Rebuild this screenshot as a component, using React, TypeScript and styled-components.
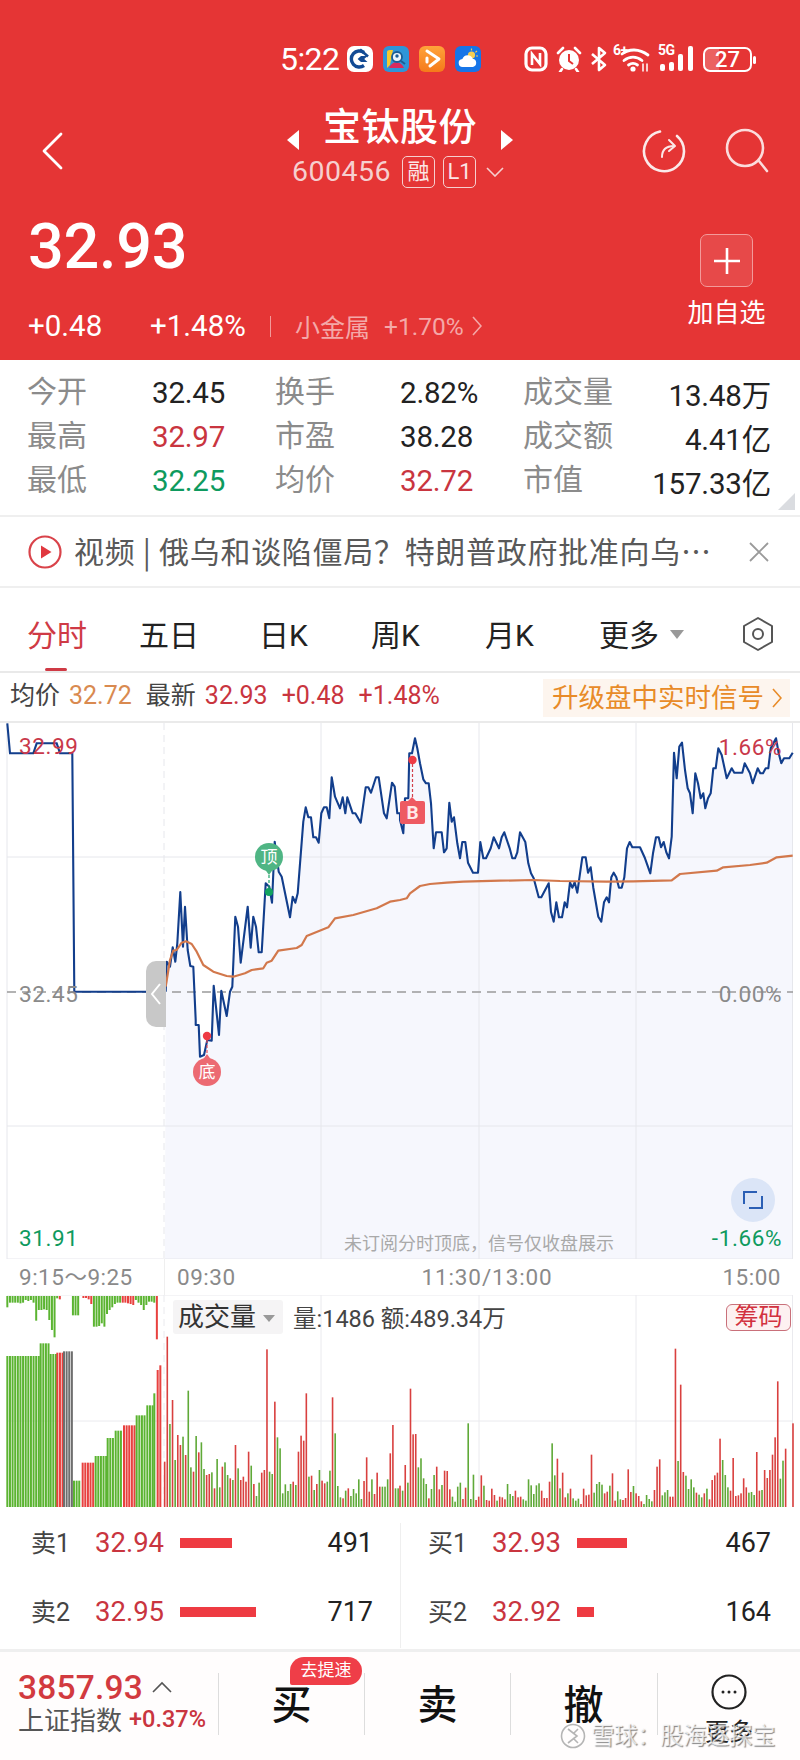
import React from "react";
import styled, { createGlobalStyle } from "styled-components";

const FONT = `Roboto, "Noto Sans CJK SC", sans-serif`;
const RED = "#C9353F";
const GREEN = "#0E9A5E";

const Global = createGlobalStyle`
  html, body { margin: 0; padding: 0; background: #fff; }
  body { font-family: ${FONT}; }
  * { box-sizing: border-box; }
`;

const Page = styled.div`
  position: relative; width: 800px; height: 1760px; overflow: hidden;
  display: flex; flex-direction: column; background: #fff; font-family: ${FONT};
`;

/* ---------- header ---------- */
const Header = styled.header`
  height: 360px; flex: none; background: #E53535; color: #fff;
  display: flex; flex-direction: column;
`;
const StatusBar = styled.div`
  height: 100px; padding: 46px 48px 0 280px; display: flex; align-items: flex-start;
`;
const Clock = styled.span`
  width: 67px; height: 26px; line-height: 26px; font-size: 32px; letter-spacing: -.6px; white-space: nowrap;
`;
const AppIcons = styled.div`display: flex; gap: 10px; align-items: center;`;
const SysIcons = styled.div`margin-left: auto; display: flex; align-items: center; gap: 7px; height: 26px;`;
const Battery = styled.div`
  position: relative; width: 49px; height: 25px; border: 2px solid #fff; border-radius: 7px;
  display: flex; align-items: center; justify-content: center; font-size: 22px; font-weight: 500;
  background: linear-gradient(90deg, rgba(255,255,255,.22) 0 30%, transparent 30%);
  &::after { content: ""; position: absolute; right: -6px; top: 7px; width: 3px; height: 8px; background: #fff; border-radius: 2px; }
`;
const TinyStack = styled.div`position: relative; display: flex; align-items: flex-end; height: 26px;`;
const TinyTag = styled.span`
  position: absolute; left: ${p => p.$left}px; top: -3px; font-size: 14px; font-weight: 700; line-height: 14px; letter-spacing: -.6px;
`;

const Nav = styled.div`
  height: 96px; display: grid; grid-template-columns: 1fr auto 1fr; align-items: center;
`;
const Back = styled.div`padding: 6px 0 0 40px; display: flex;`;
const Center = styled.div`display: flex; flex-direction: column; align-items: center; padding-top: 3px;`;
const TitleRow = styled.div`display: flex; align-items: center; gap: 24px; height: 44px;`;
const Title = styled.h1`margin: 0; font-size: 38px; line-height: 44px; font-weight: 500; letter-spacing: .5px;`;
const Tri = styled.span`
  width: 0; height: 0; margin-top: 27px; border-top: 10px solid transparent; border-bottom: 10px solid transparent;
  ${p => p.$dir === "l" ? "border-right: 12px solid #fff;" : "border-left: 12px solid #fff;"}
`;
const SubRow = styled.div`display: flex; align-items: center; height: 46px; gap: 8px; color: #F6CFCF; margin-left: -4px;`;
const Code = styled.span`font-size: 28.5px; letter-spacing: .5px; margin-right: 3px;`;
const Tag = styled.span`
  width: 33px; height: 32px; border: 1.5px solid #F6CFCF; border-radius: 5px; font-size: 22px; line-height: 29px;
  text-align: center; color: #FBE6E6;
`;
const Caret = styled.span`display: flex; margin-left: 2px;`;
const NavRight = styled.div`display: flex; justify-content: flex-end; gap: 34px; padding: 6px 29px 0 0;`;

const Quote = styled.div`flex: 1; display: flex; justify-content: space-between;`;
const QuoteLeft = styled.div`display: flex; flex-direction: column; padding-left: 28px;`;
const Price = styled.div`height: 96px; line-height: 102px; font-size: 63px; font-weight: 500; letter-spacing: -.3px;`;
const ChangeRow = styled.div`height: 68px; display: flex; align-items: center; font-size: 29.5px;`;
const ChangeA = styled.span`width: 122px;`;
const ChangeB = styled.span`width: 120px;`;
const VLine = styled.span`width: 1px; height: 21px; background: rgba(255,255,255,.5); margin-right: 24px;`;
const Sector = styled.span`font-size: 25px; color: #F4A8A8; width: 89px;`;
const SectorPct = styled.span`font-size: 24.5px; color: #F4A8A8; margin-right: 8px;`;
const AddCol = styled.div`
  width: 113px; padding: 38px 34px 0 0; display: flex; flex-direction: column; align-items: center; flex: none;
`;
const AddBtn = styled.div`
  width: 53px; height: 53px; flex: none; border: 1px solid #F39A9A; border-radius: 7px; background: rgba(255,255,255,.1);
  display: flex; align-items: center; justify-content: center;
`;
const AddText = styled.span`font-size: 26px; line-height: 30px; margin-top: 11px; white-space: nowrap;`;

/* ---------- info ---------- */
const InfoGrid = styled.section`
  position: relative; height: 157px; flex: none; padding: 11px 29px 0 28px; border-bottom: 2px solid #EFEFEF;
  display: grid; grid-template-columns: 124px 124px 124px 124px 124px 1fr; grid-auto-rows: 44px; align-items: center;
  &::after { content: ""; position: absolute; right: 5px; bottom: 5px; width: 0; height: 0;
    border-left: 17px solid transparent; border-bottom: 17px solid #DADCE0; }
`;
const InfoLabel = styled.span`font-size: 30px; line-height: 38px; color: #8B8B8B; font-weight: 400; margin: -2px 0 0 -1px;`;
const InfoValue = styled.span`
  font-size: 29.5px; color: ${p => p.$c || "#222"}; text-align: ${p => p.$right ? "right" : "left"}; white-space: nowrap; letter-spacing: -.2px;
`;

const Notice = styled.section`
  height: 71px; flex: none; border-bottom: 2px solid #EFEFEF; display: flex; align-items: center; padding: 0 30px 0 28px;
`;
const NoticeIcon = styled.svg`flex: none;`;
const NoticeText = styled.span`
  font-size: 30px; line-height: 40px; letter-spacing: .7px; color: #595959; margin: -3px 0 0 12px; white-space: nowrap;
  font-family: "Noto Sans CJK SC", Roboto, sans-serif;
`;
const NoticeClose = styled.div`margin-left: auto; display: flex;`;

const Tabs = styled.nav`
  height: 85px; flex: none; border-bottom: 2px solid #E9E9E9; padding: 0 0 0 27px; display: grid;
  grid-template-columns: 112px 120px 112px 114px 114px 142px auto; align-items: center;
`;
const Tab = styled.span`
  position: relative; font-size: 30px; height: 83px; padding-top: 7px; color: ${p => p.$on ? "#CF3A45" : "#222"};
  white-space: nowrap; display: flex; align-items: center; gap: 11px;
  ${p => p.$on ? `&::after { content: ""; position: absolute; left: 18px; bottom: 0; width: 22px; height: 3px; background: #CF3A45; border-radius: 2px; }` : ""}
`;
const MoreTri = styled.span`
  width: 0; height: 0; margin-top: 2px; border-left: 7px solid transparent; border-right: 7px solid transparent; border-top: 9px solid #999;
`;
const Gear = styled.svg`margin-top: 8px;`;

const Legend = styled.div`
  height: 50px; flex: none; border-bottom: 2px solid #EAEAEA; padding: 0 10px 0 10px; display: flex; align-items: center;
  font-size: 25px; line-height: 34px; white-space: nowrap;
`;
const LegendItem = styled.span`color: ${p => p.$c}; margin: -3px ${p => p.$mr}px 0 0;`;
const Upgrade = styled.span`
  margin-left: auto; height: 38px; width: 247px; padding-left: 9px; background: #FDF5EE; color: #E88B28; font-size: 26.5px; line-height: 38px;
  display: flex; align-items: center; gap: 8px; margin-top: 2px;
`;

/* ---------- price chart ---------- */
const ChartBox = styled.section`position: relative; height: 536px; flex: none;`;
const ChartSvg = styled.svg`display: block; position: absolute; inset: 0;`;
const AxisText = styled.span`
  position: absolute; top: ${p => p.$y - 723 - 14}px; line-height: 28px; font-size: 22.5px; letter-spacing: .6px; color: ${p => p.$c};
  ${p => p.$right ? `right: ${800 - p.$x}px;` : `left: ${p.$x}px;`}
`;
const Handle = styled.div`
  position: absolute; left: 146px; top: 238px; width: 20px; height: 66px; background: #C8C8C8; border-radius: 10px 0 0 10px;
  display: flex; align-items: center; justify-content: center;
`;
const Pin = styled.span`
  position: absolute; left: ${p => p.$x - 14}px; top: ${p => p.$y - 723 - 14}px; width: 28px; height: 28px; border-radius: 50%;
  background: ${p => p.$c}; color: #fff; font-size: 17px; line-height: 28px; text-align: center;
  &::before { content: ""; position: absolute; left: 9px; ${p => p.$up ? "top: -4px; border-bottom: 7px solid " + p.$c : "bottom: -4px; border-top: 7px solid " + p.$c};
    border-left: 5px solid transparent; border-right: 5px solid transparent; }
`;
const BuyMark = styled.span`
  position: absolute; left: 400px; top: 78px; width: 25px; height: 23px; background: #EE5A62; border-radius: 2px; color: #FFE9E9;
  font-size: 19px; font-weight: 700; line-height: 23px; text-align: center;
  &::before { content: ""; position: absolute; left: 7px; top: -4px; border-bottom: 5px solid #EE5A62;
    border-left: 5px solid transparent; border-right: 5px solid transparent; }
`;
const Expand = styled.div`
  position: absolute; left: 731px; top: 455px; width: 44px; height: 44px; border-radius: 50%; background: #DBE5F7;
  display: flex; align-items: center; justify-content: center;
`;
const Hint = styled.span`position: absolute; left: 344px; top: 509px; font-size: 18px; line-height: 24px; color: #A9A9A9; white-space: nowrap;`;

const TimeAxis = styled.div`
  height: 36px; flex: none; display: flex; font-size: 22.5px; color: #8A8A8A; letter-spacing: .5px; white-space: nowrap;
`;
const PreTime = styled.div`width: 165px; padding-left: 19px; line-height: 36px; border-right: 1px solid #EFEFEF;`;
const SessionTime = styled.div`
  flex: 1; padding: 0 19px 0 12px; display: grid; grid-template-columns: 1fr auto 1fr; line-height: 36px;
`;
const MidTime = styled.span`margin-left: 16px; letter-spacing: .9px;`;
const EndTime = styled.span`text-align: right;`;

/* ---------- volume ---------- */
const VolumeBox = styled.section`position: relative; height: 212px; flex: none;`;
const VolumeHead = styled.div`
  position: absolute; left: 173px; top: 5px; display: flex; align-items: center; white-space: nowrap;
`;
const VolumeChip = styled.span`
  width: 110px; height: 34px; background: #F5F4F5; border-radius: 3px; font-size: 26px; line-height: 34px; color: #333; padding-left: 5px;
  display: flex; align-items: center; gap: 7px;
`;
const ChipTri = styled.span`width: 0; height: 0; border-left: 6px solid transparent; border-right: 6px solid transparent; border-top: 7px solid #999; margin-top: 3px;`;
const VolumeStat = styled.span`margin-left: 10px; font-size: 23.5px; color: #444;`;
const Chips = styled.span`
  position: absolute; right: 9px; top: 9px; width: 65px; height: 27px; border: 1px solid #C9707A; border-radius: 6px; background: #FDF1F1;
  color: #D2323F; font-size: 24px; line-height: 25px; text-align: center;
`;

/* ---------- order book ---------- */
const Book = styled.section`height: 142px; flex: none; display: flex; padding-top: 2px;`;
const BookSide = styled.div`
  width: 400px; height: 125px; margin-top: 14px; display: flex; flex-direction: column;
  padding: 0 ${p => p.$right ? 29 : 27}px 0 ${p => p.$right ? 28 : 32}px; ${p => p.$right ? "border-left: 1px solid #EFEFEF;" : ""}
`;
const BookRow = styled.div`display: flex; align-items: center; height: 69px; flex: none; margin-top: ${p => p.$first ? -15 : 0}px;`;
const BookLabel = styled.span`width: 63px; font-size: 25px; color: #444; white-space: nowrap; margin: -3px 0 0 -1px;`;
const BookPrice = styled.span`width: 85px; font-size: 27.500px; color: ${RED}; margin: 0 0 0 1px;`;
const BookBar = styled.span`width: ${p => p.$w}px; height: 10px; background: #EE3B42;`;
const BookQty = styled.span`margin-left: auto; font-size: 27px; color: #222;`;

/* ---------- bottom ---------- */
const Bottom = styled.footer`
  flex: 1; border-top: 3px solid #EFEFEF; background: #FFFDFD; display: flex; align-items: flex-start; padding-top: 21px;
`;
const IndexBlock = styled.div`width: 218px; flex: none; padding-left: 18px; margin-top: -3px;`;
const IndexTop = styled.div`display: flex; align-items: center; height: 34px; gap: 9px;`;
const IndexValue = styled.span`font-size: 33.5px; font-weight: 500; color: #D23A3F; letter-spacing: .2px;`;
const IndexBottom = styled.div`display: flex; align-items: center; height: 29px; gap: 7px; margin-top: 0;`;
const IndexName = styled.span`font-size: 26px; color: #555; white-space: nowrap;`;
const IndexPct = styled.span`font-size: 23.5px; color: #C9353F; font-weight: 500;`;
const Action = styled.div`
  position: relative; width: 146px; height: 62px; flex: none; border-left: 1px solid #DDD;
  display: flex; flex-direction: column; align-items: center; justify-content: center;
  font-size: 40px; color: #111; font-weight: 500; line-height: 44px; padding-top: 3px;
`;
const Speed = styled.span`
  position: absolute; left: 71px; top: -16px; width: 72px; height: 28px; background: #EF3E48; color: #fff; font-size: 17px; line-height: 27px;
  text-align: center; border-radius: 14px 14px 14px 2px; font-weight: 400; z-index: 1;
`;
const MoreCell = styled.div`
  width: 143px; height: 62px; flex: none; border-left: 1px solid #DDD; display: flex; flex-direction: column; align-items: center;
  margin-left: 1px;
`;
const MoreIcon = styled.svg`flex: none; margin-top: 1px;`;
const MoreLabel = styled.span`font-size: 24px; line-height: 30px; color: #222; margin-top: 7px; flex: none;`;
const Watermark = styled.div`
  position: absolute; left: 560px; top: 1722px; display: flex; align-items: center; gap: 5px; pointer-events: none;
`;
const WatermarkText = styled.span`
  font-size: 23.5px; line-height: 28px; color: rgba(255,255,255,.72); text-shadow: 1px 1px 1px rgba(90,90,90,.75); white-space: nowrap; letter-spacing: -.5px;
`;

/* ---------- chart data (coordinates read from the reference) ---------- */
type P = [number, number];
const z3 = (a: number[]): P[] => { const r: P[] = []; for (let i = 0; i < a.length; i += 2) r.push([a[i] / 3, 720 + a[i + 1] / 3]); return r; };
const z4 = (a: number[]): P[] => { const r: P[] = []; for (let i = 0; i < a.length; i += 2) r.push([400 + a[i] / 3, 720 + a[i + 1] / 3]); return r; };

const prePts = z3([22,10,30,100,100,100,110,70,170,70,180,100,217,100,223,815,495,815]);
const sessionPts = [
  ...z3([497,815,500,725,510,740,518,682,526,725,532,670,541,516,549,680,555,560,563,690,571,738,580,740,587,900,587,915,596,915,600,1010,612,1005,622,960,635,962,641,797,657,945,664,812,680,888,690,815,697,800,706,590,714,620,722,728,743,560,752,683,760,590,768,620,776,697,785,697,797,490,808,500,816,548,824,365,836,455,845,470,870,592,878,530,886,548,893,520,910,305,917,262,925,292,933,292,940,352,948,352,956,368,964,280,972,262,980,262,988,295,995,172,1005,230,1020,265,1028,232,1036,280,1042,232,1058,280,1066,280,1082,308,1097,202,1105,202,1113,218,1128,172,1136,172,1152,280,1160,295,1176,188,1184,200,1192,280,1200,280]),
  ...z4([0,300,10,340,15,235,25,235,28,100,36,100,45,55,52,85,60,130,70,178,78,190,86,190,93,250,101,385,108,337,125,337,132,397,140,385,148,248,155,305,162,292,172,370,180,415,187,366,196,366,204,428,219,458,234,458,241,366,250,415,258,415,272,385,281,352,297,385,305,352,313,337,329,385,337,415,345,415,352,397,360,337,376,366,385,430,393,460,401,475,416,532,424,532,446,490,453,576,461,605,469,547,477,592,486,592,494,547,501,562,510,487,517,503,524,487,532,518,547,412,557,412,564,458,572,442,580,503,595,590,604,605,612,547,620,532,627,547,634,472,641,458,649,472,657,503,665,503,673,472,681,385,689,366,697,382,720,382,735,415,751,460,759,400,768,352,776,352,783,382,791,366,799,397,807,415,815,350,822,98,830,175,838,80,846,68,855,150,863,205,870,220,878,280,886,160,894,190,902,235,910,220,916,265,924,235,932,220,940,145,947,145,955,85,965,105,980,175,995,145,1003,158,1027,158,1034,130,1050,160,1058,190,1073,145,1081,160,1089,160,1097,145,1105,145,1112,85,1128,55,1136,100,1144,130,1152,115,1168,115,1178,98]),
];
const avgPts = [
  ...z3([497,800,510,720,520,692,530,690,545,668,558,664,575,672,590,695,610,735,640,755,680,768,700,770,735,760,755,750,790,745,800,728,815,722,835,692,890,684,905,675,920,648,985,622,1005,595,1060,585,1130,565,1170,545,1200,540]),
  ...z4([20,535,30,520,60,498,90,492,140,488,190,485,300,482,400,480,480,483,620,485,700,484,815,481,840,462,950,452,970,442,1050,435,1100,428,1130,412,1178,407]),
];
const d = (pts: P[]) => pts.map((p, i) => `${i ? "L" : "M"}${p[0].toFixed(1)} ${p[1].toFixed(1)}`).join("");

const VOL_BASE = 1507;
const PITCH = 7.87;
const vol7 = "r515 r140 g402 r330 g510 r435 r465 g440 r495 g302 g532 r545 g438 r487 g457 g537 r555 r552 g547 r595 g507 g592 r530 g517 g555 r565 g570 r465 g535 r570 r560 r575 r485 g527 r582 g618 g578 r548 r540 r178 g545 g552 r335 g442 g475 g610 g583 g603 g582 r575 g585 r485 r437 r452 r310 g560 r557 g600 r582 g540 r572 r580 g575 g542 r322 g430 g588 g622 r625 g602 r595 g618 g597 g610 g568 g627 r573 r502 r605 g568 r612 r548 r590 g590 g590 g568 r490 r405 g595 g595".split(" ");
const vol8 = "r587 g602 r525 g578 r296 r433 r432 g532 g505 g565 g582 r625 g597 g555 r530 r598 g585 r542 r543 r598 g620 g635 g590 g578 r627 r593 g400 g627 g554 r630 r620 r556 g587 r630 r632 r596 r615 g632 r620 r622 r628 g582 g612 g618 r602 r622 r620 g628 g632 g568 g586 g612 g586 g580 r602 r624 r624 r575 g460 g556 r506 g595 r548 r622 g610 r596 g625 g632 g626 r642 r596 r616 r614 r494 g608 g582 g576 g584 r610 r605 g587 r550 r632 g604 g628 r630 r624 r538 r606 g588 r610 r618 r634 g642 g615 g627 g634 r600 r530 r508 g616 g607 g600 r620 r620 r176 g513 r284 r546 g557 g597 g568 g592 r608 g614 g622 r610 g596 r628 r570 r556 r548 r446 g510 g555 g592 r602 r504 r618 r616 r610 r565 r592 g608 g606 g615 r486 r602 g600 r540 r564 r540 r494 r442 r274 g566 g512 r476".split(" ");
const preVol: [number, number, string, number][] = [
  [22, 120, "g", 198], [122, 150, "g", 160], [152, 170, "g", 192], [172, 190, "r", 188], [192, 220, "k", 184],
  [222, 245, "g", 572], [248, 284, "r", 518], [287, 320, "g", 498], [323, 345, "g", 444], [347, 369, "g", 422],
  [372, 407, "r", 406], [410, 440, "g", 376], [442, 460, "g", 346], [463, 470, "g", 310], [473, 477, "r", 240], [481, 485, "r", 226],
];
const hang = "g52 g38 g38 g38 g38 g40 g38 g30 g33 g30 g38 g92 g60 g60 g58 g60 g90 g120 g142 g25 r28 - - - - g76 g76 g76 - r24 r24 r28 r42 g110 g110 g108 g100 g110 g72 g60 g52 g42 g38 g38 r38 r38 r40 r42 r45 g30 g38 g45 g60 g45 g35 g35 g38 r148".split(" ");

const COL: Record<string, string> = { r: "#E8413F", g: "#5BB431", k: "#6E6E6E" };
const SCOL: Record<string, string> = { r: "#D9403F", g: "#5FA938" };

function volumeBars() {
  const out: React.ReactNode[] = [];
  preVol.forEach(([a, b, c, top], s) => {
    for (let x = a, i = 0; x <= b; x += PITCH, i++)
      out.push(<rect key={`p${s}-${i}`} x={x / 3 - 1} y={1290 + top / 3} width={2} height={VOL_BASE - 1290 - top / 3} fill={COL[c]} />);
  });
  hang.forEach((t, i) => {
    if (t === "-") return;
    const x = (22 + i * PITCH) / 3;
    out.push(<rect key={`h${i}`} x={x - 1} y={1296} width={2} height={1290 + Number(t.slice(1)) / 3 - 1296} fill={COL[t[0]]} />);
  });
  const main = (arr: string[], x0: number, k: string) => arr.forEach((t, i) => {
    const x = x0 + i * (PITCH / 3);
    const y = 1290 + Number(t.slice(1)) / 3;
    out.push(<rect key={k + i} x={x - .8} y={y} width={1.6} height={VOL_BASE - y} fill={SCOL[t[0]]} />);
  });
  main(vol7, 494 / 3, "a");
  main(vol8, 400, "b");
  out.push(<rect key="last" x={792.2} y={1290 + 400 / 3} width={1.6} height={VOL_BASE - 1290 - 400 / 3} fill={SCOL.r} />);
  return out;
}

const GRID = "#E6E7EC";

function PriceChart() {
  const area = d(sessionPts) + `L793 1259L165 1259Z`;
  return (
    <ChartSvg width={800} height={536} viewBox="0 723 800 536">
      <path d={area} fill="#F6F7FD" />
      <g stroke={GRID} strokeWidth={1} fill="none">
        <path d="M7 723V1259M321 723V1259M479 723V1259M636 723V1259M792.5 723V1259" />
        <path d="M7 857H793M7 1126H793M7 1259H793" />
        <path d="M164 723V1259" strokeDasharray="7 5" />
      </g>
      <path d="M7 992H793" stroke="#9A9A9A" strokeWidth={1.4} strokeDasharray="9 6" />
      <path d={d(prePts)} fill="none" stroke="#123E8C" strokeWidth={2.1} />
      <path d={d(sessionPts)} fill="none" stroke="#123E8C" strokeWidth={2.1} strokeLinejoin="round" />
      <path d={d(avgPts)} fill="none" stroke="#D2784C" strokeWidth={2.2} strokeLinejoin="round" />
      <path d="M269 875V892" stroke="#1FA56A" strokeDasharray="3 2" strokeWidth={1.2} />
      <circle cx={269} cy={892} r={4} fill="#12A35F" />
      <path d="M207 1040V1058" stroke="#E5505A" strokeDasharray="3 2" strokeWidth={1.2} />
      <circle cx={207} cy={1036} r={4.2} fill="#EE3A44" />
      <path d="M412.5 764V800" stroke="#D2404A" strokeDasharray="3 2" strokeWidth={1.2} />
      <circle cx={412.5} cy={760} r={4.2} fill="#EE3A44" />
    </ChartSvg>
  );
}

function VolumeChart() {
  return (
    <ChartSvg width={800} height={212} viewBox="0 1295 800 212">
      <g stroke="#EAEAEE" strokeWidth={1} fill="none">
        <path d="M7 1295H793M7 1421H793" />
        <path d="M321 1295V1507M479 1295V1507M636 1295V1507M792.5 1295V1507" />
        <path d="M164 1295V1507" strokeDasharray="7 5" />
      </g>
      {volumeBars()}
    </ChartSvg>
  );
}

/* ---------- icons ---------- */
const CcbIcon = () => (
  <svg width="26" height="26" viewBox="0 0 26 26">
    <rect width="26" height="26" rx="7" fill="#fff" />
    <path d="M17 6.5A8 8 0 1 0 17 19.5" fill="none" stroke="#124A94" strokeWidth="3.4" />
    <path d="M14 10l-3.4 3 3.4 3h6.5l-3.300-3 3.300-3z" fill="#124A94" />
    <path d="M13 3.5l8 7" stroke="#124A94" strokeWidth="2.6" />
  </svg>
);
const SearchApp = () => (
  <svg width="26" height="26" viewBox="0 0 26 26">
    <rect width="26" height="26" rx="6" fill="#2E95D8" />
    <path d="M4 22V6q0-2 3-2h3L7 19z" fill="#F5C92E" />
    <path d="M6 22c3-7 11-8 15 0z" fill="#D92B5E" />
    <circle cx="14" cy="11" r="5" fill="#EAF5FC" stroke="#1B5E96" strokeWidth="1.8" />
    <circle cx="14" cy="10" r="1.7" fill="#1B5E96" />
    <path d="M18 15l4 3" stroke="#1B5E96" strokeWidth="2" />
  </svg>
);
const PlayApp = () => (
  <svg width="26" height="26" viewBox="0 0 26 26">
    <defs><linearGradient id="pa" x1="0" y1="0" x2="0" y2="1"><stop offset="0" stopColor="#FFA33A" /><stop offset="1" stopColor="#F57A1A" /></linearGradient></defs>
    <rect width="26" height="26" rx="6" fill="url(#pa)" />
    <path d="M8 5l12 8-9 7" fill="none" stroke="#fff" strokeWidth="3" strokeLinecap="round" strokeLinejoin="round" />
    <path d="M8 12v4" stroke="#fff" strokeWidth="3" strokeLinecap="round" />
  </svg>
);
const WeatherApp = () => (
  <svg width="26" height="26" viewBox="0 0 26 26">
    <rect width="26" height="26" rx="6" fill="#1675E8" />
    <circle cx="16.5" cy="9" r="3.6" fill="#F7CE52" />
    <path d="M16.5 2.5v2M22 5l-1.600 1.400M23 10h-2" stroke="#F7CE52" strokeWidth="1.2" />
    <path d="M8 21a4 4 0 0 1-.6-8 5.500 5.500 0 0 1 10.400-.2A4.200 4.200 0 0 1 18 21z" fill="#fff" />
  </svg>
);
const NfcIcon = () => (
  <svg width="24" height="26" viewBox="0 0 24 26" fill="none" stroke="#fff">
    <rect x="2" y="2" width="20" height="22" rx="6" strokeWidth="3.2" />
    <path d="M8 19V8l8 10V7" strokeWidth="2.6" />
  </svg>
);
const AlarmIcon = () => (
  <svg width="28" height="26" viewBox="0 0 28 26" fill="#fff">
    <circle cx="14" cy="14" r="10" />
    <path d="M14 8v7l4 3" fill="none" stroke="#E53535" strokeWidth="2" />
    <path d="M3 7l5-5M25 7l-5-5M7 23l-2 3M21 23l2 3" stroke="#fff" strokeWidth="2.6" strokeLinecap="round" fill="none" />
  </svg>
);
const BtIcon = () => (
  <svg width="18" height="26" viewBox="0 0 18 26" fill="none" stroke="#fff" strokeWidth="2.6" strokeLinejoin="round">
    <path d="M2 8l13 11-6 5V2l6 5L2 18" />
  </svg>
);
const WifiIcon = () => (
  <TinyStack>
    <TinyTag $left={-2}>6+</TinyTag>
    <svg width="36" height="26" viewBox="0 0 36 26" fill="none" stroke="#fff" strokeWidth="2.8" strokeLinecap="round">
      <path d="M7 8C14 2.500 24 2.500 33 9" /><path d="M9 14.500c5.500-4.500 12.500-4.500 18 0" /><path d="M13.500 19c2.800-2 6.200-2 9 0" />
      <circle cx="18" cy="23" r="2.600" fill="#fff" stroke="none" />
      <path d="M28 18v7M32 25v-7" strokeWidth="1.500" />
    </svg>
  </TinyStack>
);
const SignalIcon = () => (
  <TinyStack>
    <TinyTag $left={0}>5G</TinyTag>
    <svg width="38" height="26" viewBox="0 0 38 26" fill="#fff">
      <rect x="2" y="18" width="5" height="7" rx="2" /><rect x="11" y="16" width="5" height="9" rx="2" />
      <rect x="20" y="8" width="5" height="17" rx="2" /><rect x="30" y="0" width="5" height="25" rx="2" />
    </svg>
  </TinyStack>
);

export default function App() {
  return (
    <Page>
      <Global />
      <Header>
        <StatusBar>
          <Clock>5:22</Clock>
          <AppIcons><CcbIcon /><SearchApp /><PlayApp /><WeatherApp /></AppIcons>
          <SysIcons>
            <NfcIcon /><AlarmIcon /><BtIcon /><WifiIcon /><SignalIcon />
            <Battery>27</Battery>
          </SysIcons>
        </StatusBar>
        <Nav>
          <Back>
            <svg width="24" height="38" viewBox="0 0 24 38" fill="none" stroke="#fff" strokeWidth="2.800" strokeLinecap="round" strokeLinejoin="round">
              <path d="M21 2L4 19l17 17" />
            </svg>
          </Back>
          <Center>
            <TitleRow><Tri $dir="l" /><Title>宝钛股份</Title><Tri $dir="r" /></TitleRow>
            <SubRow>
              <Code>600456</Code><Tag>融</Tag><Tag>L1</Tag>
              <Caret>
                <svg width="18" height="10" viewBox="0 0 18 10" fill="none" stroke="#F6CFCF" strokeWidth="1.600"><path d="M1 1l8 8 8-8" /></svg>
              </Caret>
            </SubRow>
          </Center>
          <NavRight>
            <svg width="48" height="48" viewBox="0 0 48 48" fill="none" stroke="#FBE9E9" strokeWidth="2.600" strokeLinecap="round" strokeLinejoin="round">
              <path d="M36 9A20 20 0 1 1 19 4.600" />
              <path d="M21 30c0-7 3-11 12-11" strokeWidth="2" /><path d="M28 13l6 6-6 5" strokeWidth="2" />
            </svg>
            <svg width="48" height="48" viewBox="0 0 48 48" fill="none" stroke="#FBDCDC" strokeWidth="2.600" strokeLinecap="round">
              <circle cx="22" cy="21" r="18" /><path d="M36 34l8 10" />
            </svg>
          </NavRight>
        </Nav>
        <Quote>
          <QuoteLeft>
            <Price>32.93</Price>
            <ChangeRow>
              <ChangeA>+0.48</ChangeA><ChangeB>+1.48%</ChangeB><VLine />
              <Sector>小金属</Sector><SectorPct>+1.70%</SectorPct>
              <svg width="10" height="20" viewBox="0 0 10 20" fill="none" stroke="#F4A8A8" strokeWidth="1.600"><path d="M1 1l8 9-8 9" /></svg>
            </ChangeRow>
          </QuoteLeft>
          <AddCol>
            <AddBtn>
              <svg width="28" height="28" viewBox="0 0 28 28" stroke="#fff" strokeWidth="2.600"><path d="M14 1v26M1 14h26" /></svg>
            </AddBtn>
            <AddText>加自选</AddText>
          </AddCol>
        </Quote>
      </Header>

      <InfoGrid>
        <InfoLabel>今开</InfoLabel><InfoValue>32.45</InfoValue>
        <InfoLabel>换手</InfoLabel><InfoValue>2.82%</InfoValue>
        <InfoLabel>成交量</InfoLabel><InfoValue $right>13.48万</InfoValue>
        <InfoLabel>最高</InfoLabel><InfoValue $c={RED}>32.97</InfoValue>
        <InfoLabel>市盈</InfoLabel><InfoValue>38.28</InfoValue>
        <InfoLabel>成交额</InfoLabel><InfoValue $right>4.41亿</InfoValue>
        <InfoLabel>最低</InfoLabel><InfoValue $c={GREEN}>32.25</InfoValue>
        <InfoLabel>均价</InfoLabel><InfoValue $c={RED}>32.72</InfoValue>
        <InfoLabel>市值</InfoLabel><InfoValue $right>157.33亿</InfoValue>
      </InfoGrid>

      <Notice>
        <NoticeIcon width="34" height="34" viewBox="0 0 34 34">
          <circle cx="17" cy="17" r="15.500" fill="none" stroke="#D9434A" strokeWidth="2.200" />
          <path d="M13 10.500v13l10.500-6.500z" fill="#E0383F" />
        </NoticeIcon>
        <NoticeText>视频 | 俄乌和谈陷僵局？特朗普政府批准向乌…</NoticeText>
        <NoticeClose>
          <svg width="22" height="22" viewBox="0 0 22 22" stroke="#9A9A9A" strokeWidth="1.800"><path d="M2 2l18 18M20 2L2 20" /></svg>
        </NoticeClose>
      </Notice>

      <Tabs>
        <Tab $on>分时</Tab><Tab>五日</Tab><Tab>日K</Tab><Tab>周K</Tab><Tab>月K</Tab>
        <Tab>更多<MoreTri /></Tab>
        <Gear width="34" height="36" viewBox="0 0 34 36" fill="none" stroke="#555" strokeWidth="2">
          <path d="M17 2l14 8v16l-14 8-14-8V10z" strokeLinejoin="round" /><circle cx="17" cy="18" r="5" />
        </Gear>
      </Tabs>

      <Legend>
        <LegendItem $c="#444" $mr={9}>均价</LegendItem>
        <LegendItem $c="#D98A50" $mr={14}>32.72</LegendItem>
        <LegendItem $c="#444" $mr={9}>最新</LegendItem>
        <LegendItem $c="#C9353F" $mr={14}>32.93</LegendItem>
        <LegendItem $c="#C9353F" $mr={14}>+0.48</LegendItem>
        <LegendItem $c="#C9353F" $mr={0}>+1.48%</LegendItem>
        <Upgrade>升级盘中实时信号
          <svg width="10" height="20" viewBox="0 0 10 20" fill="none" stroke="#E88B28" strokeWidth="1.600"><path d="M1 1l8 9-8 9" /></svg>
        </Upgrade>
      </Legend>

      <ChartBox>
        <PriceChart />
        <AxisText $x={19} $y={746} $c="#C9384A">32.99</AxisText>
        <AxisText $x={19} $y={994} $c="#8A8A8A">32.45</AxisText>
        <AxisText $x={19} $y={1238} $c={GREEN}>31.91</AxisText>
        <AxisText $x={782} $y={747} $right $c="#C9384A">1.66%</AxisText>
        <AxisText $x={782} $y={994} $right $c="#8A8A8A">0.00%</AxisText>
        <AxisText $x={782} $y={1238} $right $c={GREEN}>-1.66%</AxisText>
        <Handle>
          <svg width="12" height="24" viewBox="0 0 12 24" fill="none" stroke="#fff" strokeWidth="2"><path d="M10 2L2 12l8 10" /></svg>
        </Handle>
        <Pin $x={269} $y={857} $c="#4FB584">顶</Pin>
        <Pin $x={207} $y={1072} $c="#EC6A72" $up>底</Pin>
        <BuyMark>B</BuyMark>
        <Expand>
          <svg width="20" height="18" viewBox="0 0 20 18" fill="none" stroke="#2B5FB5" strokeWidth="2"><path d="M1 13V1H14M19 5V17H6" /></svg>
        </Expand>
        <Hint>未订阅分时顶底，信号仅收盘展示</Hint>
      </ChartBox>

      <TimeAxis>
        <PreTime>9:15～9:25</PreTime>
        <SessionTime>
          <span>09:30</span><MidTime>11:30/13:00</MidTime><EndTime>15:00</EndTime>
        </SessionTime>
      </TimeAxis>

      <VolumeBox>
        <VolumeChart />
        <VolumeHead>
          <VolumeChip>成交量<ChipTri /></VolumeChip>
          <VolumeStat>量:1486 额:489.34万</VolumeStat>
        </VolumeHead>
        <Chips>筹码</Chips>
      </VolumeBox>

      <Book>
        <BookSide>
          <BookRow $first><BookLabel>卖1</BookLabel><BookPrice>32.94</BookPrice><BookBar $w={52} /><BookQty>491</BookQty></BookRow>
          <BookRow><BookLabel>卖2</BookLabel><BookPrice>32.95</BookPrice><BookBar $w={76} /><BookQty>717</BookQty></BookRow>
        </BookSide>
        <BookSide $right>
          <BookRow $first><BookLabel>买1</BookLabel><BookPrice>32.93</BookPrice><BookBar $w={50} /><BookQty>467</BookQty></BookRow>
          <BookRow><BookLabel>买2</BookLabel><BookPrice>32.92</BookPrice><BookBar $w={17} /><BookQty>164</BookQty></BookRow>
        </BookSide>
      </Book>

      <Bottom>
        <IndexBlock>
          <IndexTop>
            <IndexValue>3857.93</IndexValue>
            <svg width="20" height="12" viewBox="0 0 20 12" fill="none" stroke="#555" strokeWidth="1.600"><path d="M1 11l9-9 9 9" /></svg>
          </IndexTop>
          <IndexBottom><IndexName>上证指数</IndexName><IndexPct>+0.37%</IndexPct></IndexBottom>
        </IndexBlock>
        <Action>买<Speed>去提速</Speed></Action>
        <Action>卖</Action>
        <Action>撤</Action>
        <MoreCell>
          <MoreIcon width="36" height="36" viewBox="0 0 36 36" fill="none" stroke="#222" strokeWidth="2.200">
            <circle cx="18" cy="18" r="16.500" />
            <g fill="#222" stroke="none"><circle cx="12" cy="18" r="1.500" /><circle cx="18" cy="18" r="1.500" /><circle cx="24" cy="18" r="1.500" /></g>
          </MoreIcon>
          <MoreLabel>更多</MoreLabel>
        </MoreCell>
      </Bottom>

      <Watermark>
        <svg width="26" height="26" viewBox="0 0 26 26" fill="none" stroke="#B5B5B5" strokeWidth="1.600">
          <circle cx="13" cy="13" r="11.500" /><path d="M8 6l9 7-9 7M18 6l-5 5M18 20l-5-5" />
        </svg>
        <WatermarkText>雪球：股海逐探宝</WatermarkText>
      </Watermark>
    </Page>
  );
}
